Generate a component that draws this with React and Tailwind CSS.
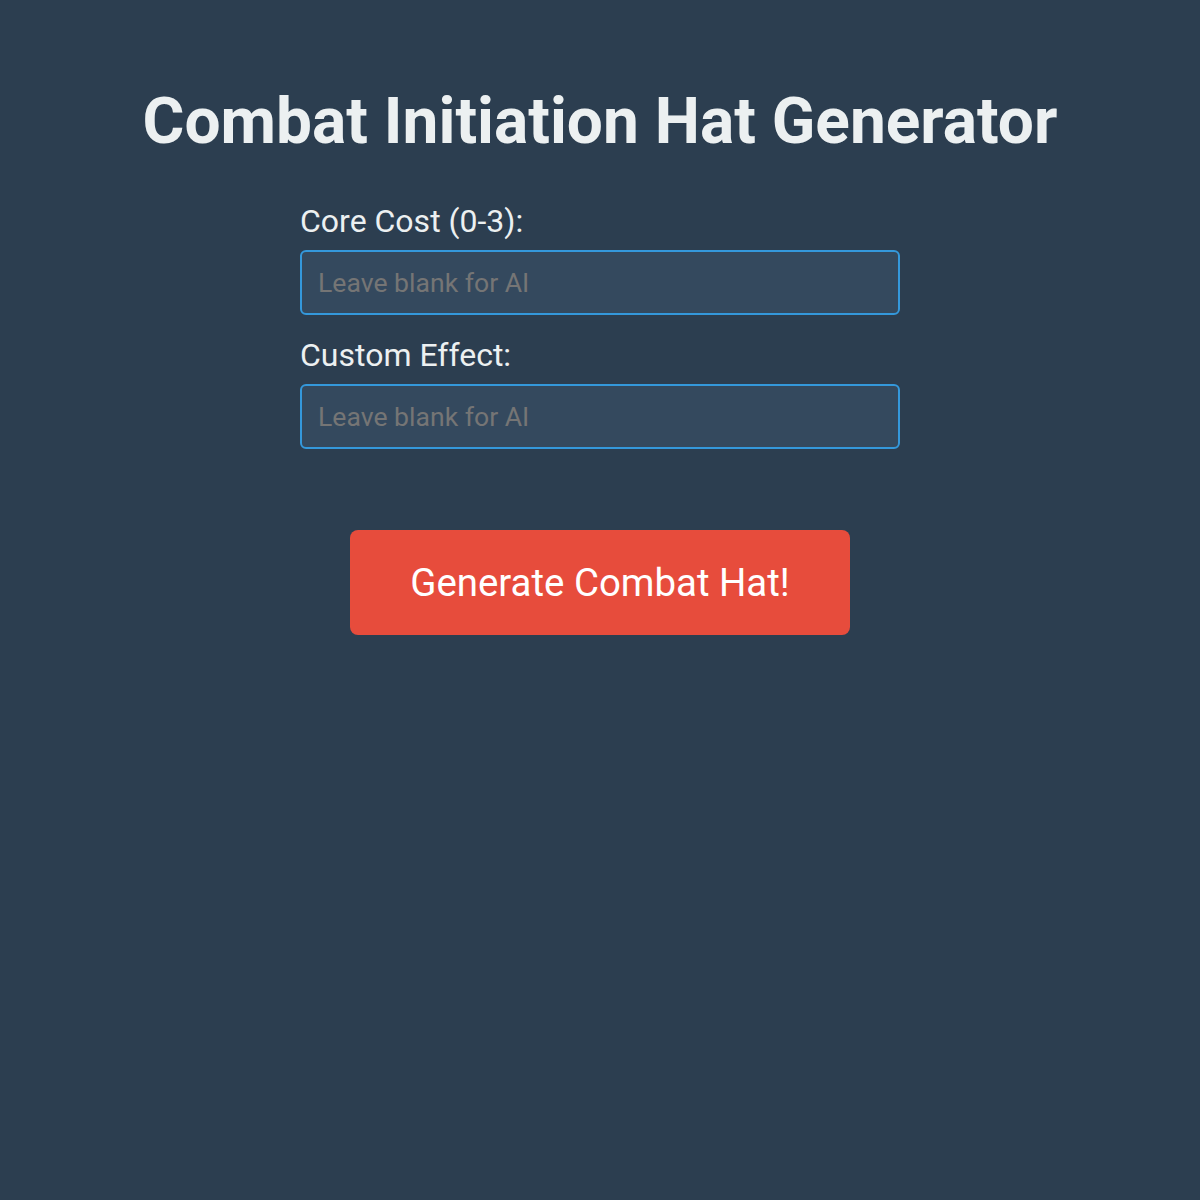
import React from "react";

const fields = [
  { id: "cost", label: "Core Cost (0-3):" },
  { id: "effect", label: "Custom Effect:" },
];

export default function App() {
  return (
    <div className="min-h-[1200px] bg-[#2c3e50] text-[#ecf0f1] font-['Roboto',sans-serif] flex flex-col items-center">
      <h1 className="mt-[84px] text-[64px] leading-[76px] font-bold text-[#ecf0f1]">
        Combat Initiation Hat Generator
      </h1>

      <form className="mt-[43px] w-[600px] flex flex-col gap-[22px]" onSubmit={(e) => e.preventDefault()}>
        {fields.map((f) => (
          <div key={f.id} className="flex flex-col">
            <label htmlFor={f.id} className="text-[32px] leading-[36px] mb-[11px]">
              {f.label}
            </label>
            <input
              id={f.id}
              type="text"
              placeholder="Leave blank for AI"
              className="h-[65px] w-full px-[16px] text-[26.6px] text-[#ecf0f1] bg-[#34495e] border-2 border-[#3498db] rounded-[6px] outline-none placeholder:text-[#757575]"
            />
          </div>
        ))}

        <button
          type="submit"
          className="mt-[59px] mx-auto w-[500px] h-[105px] bg-[#e74c3c] text-white text-[38.4px] rounded-[8px]"
        >
          Generate Combat Hat!
        </button>
      </form>
    </div>
  );
}
